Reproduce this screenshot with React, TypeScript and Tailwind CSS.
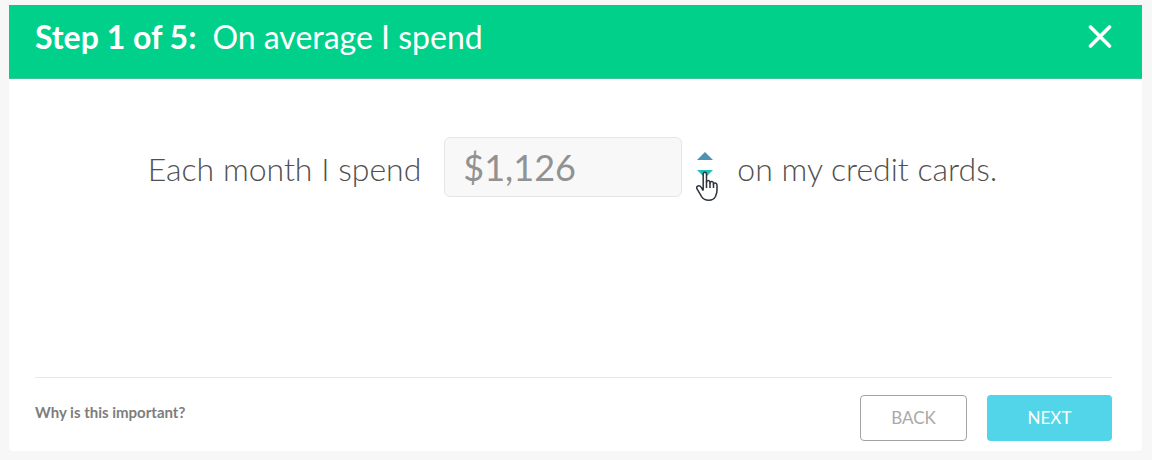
import { useState } from "react";

function CloseIcon() {
  return (
    <svg className="size-6" viewBox="0 0 24 24" fill="none" stroke="currentColor" strokeWidth="3.6" strokeLinecap="round" aria-hidden="true">
      <path d="M2.5 2 21.5 21M21.5 2 2.5 21" />
    </svg>
  );
}

function HandPointer() {
  return (
    <svg className="pointer-events-none absolute top-[18px] left-[3px] h-8 w-6" viewBox="0 0 24 32" aria-hidden="true">
      <path
        d="M7.2 20.5V4.4C7.2 2.9 7.9 2.2 8.8 2.2S10.5 2.9 10.5 4.4V12.2C10.6 9.8 13.9 9.8 14 12.2V13C14.1 10.8 17.4 11 17.5 13.2V14.2C17.7 12.2 21 12.6 21 15V20.4C21 22.6 20.2 24.2 19.6 26.2C18.4 28.8 16.2 30.2 12.8 30.2C9.4 30.2 7.2 29 5.6 26.6L1.2 19.2C.2 17.4 .8 16.2 2.1 15.9C3.6 15.6 4.6 16.4 5.4 17.6L7.2 20.5"
        fill="#fff"
        stroke="#2c333c"
        strokeWidth="1.5"
        strokeLinejoin="round"
      />
      <path d="M10.5 11.5V18M14 12.5V18M17.5 13.5V18" stroke="#2c333c" strokeWidth="1.5" />
    </svg>
  );
}

export default function App() {
  const [amount, setAmount] = useState(1126);

  return (
    <div className="bg-[#f7f7f7] px-[9px] pt-[5px] pb-[9px] font-['Lato','Open_Sans',sans-serif]">
      <main className="mr-px rounded-b bg-white">
        <header className="flex h-[74px] items-center justify-between border-b border-[#3cc59a] bg-[#00d08a] pr-[30px] pb-2.5 pl-[26px] text-white">
          <h1 className="flex items-baseline gap-4 text-[32px] leading-9">
            <strong className="font-bold">Step 1 of 5:</strong>
            <span>On average I spend</span>
          </h1>
          <button type="button" aria-label="Close" className="flex cursor-pointer">
            <CloseIcon />
          </button>
        </header>

        <section className="flex h-[298px] items-start justify-center pt-[58px] pr-1.5 text-[32px] font-light text-[#505050]">
          <div className="flex items-center">
            <label htmlFor="amount" className="pt-1">Each month I spend</label>
            <input
              id="amount"
              type="text"
              inputMode="numeric"
              value={"$" + amount.toLocaleString("en-US")}
              onChange={(e) => setAmount(Number(e.target.value.replace(/\D/g, "")))}
              className="ml-[23px] h-[60px] w-[238px] rounded-md border border-[#e6e6e6] bg-[#f8f8f8] px-[18px] text-[36px] font-normal text-[#929292] outline-none"
            />
            <div className="relative ml-[11px] flex w-6 flex-col items-center gap-2.5 pb-1">
              <button type="button" aria-label="Increase" onClick={() => setAmount(amount + 1)} className="cursor-pointer">
                <svg className="block h-2 w-4" viewBox="0 0 16 8" aria-hidden="true">
                  <path d="M8 0 16 8H0Z" fill="#4d91b3" />
                </svg>
              </button>
              <button type="button" aria-label="Decrease" onClick={() => setAmount(Math.max(0, amount - 1))} className="cursor-pointer">
                <svg className="block h-2 w-4" viewBox="0 0 16 8" aria-hidden="true">
                  <path d="M0 0H16L8 8Z" fill="#1fbfba" />
                </svg>
              </button>
              <HandPointer />
            </div>
            <span className="ml-5 pt-1">on my credit cards.</span>
          </div>
        </section>

        <footer className="mr-[30px] ml-[26px] flex h-[74px] items-start justify-between border-t border-[#e8e8e8] pt-[17px]">
          <a href="#why" className="pt-[7px] text-[15px] leading-5 font-bold text-[#7d7d7d]">Why is this important?</a>
          <div className="flex gap-5">
            <button type="button" className="h-[46px] w-[107px] cursor-pointer rounded border border-[#a3a3a3] bg-white text-[17px] text-[#a9aaa6]">BACK</button>
            <button type="button" className="h-[46px] w-[125px] cursor-pointer rounded bg-[#53d5e9] text-[17px] text-white">NEXT</button>
          </div>
        </footer>
      </main>
    </div>
  );
}
